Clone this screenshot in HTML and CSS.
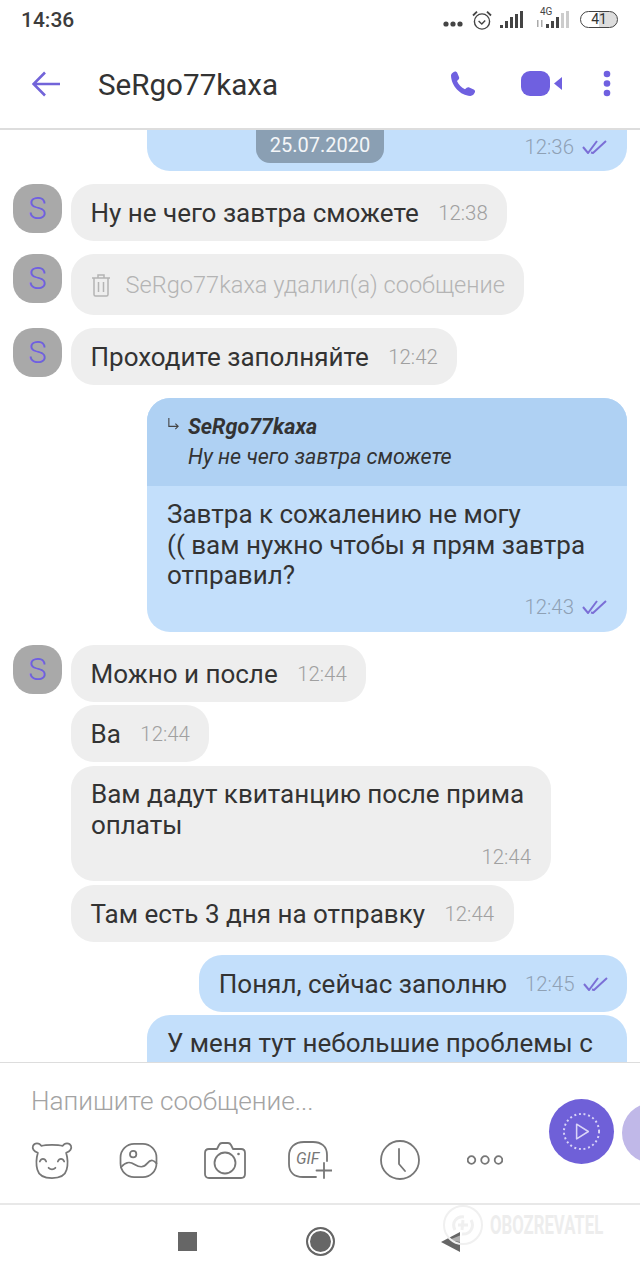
FILE: index.html
```html
<!DOCTYPE html>
<html lang="ru">
<head>
  <meta charset="UTF-8" />
  <meta name="viewport" content="width=device-width, initial-scale=1.0"/>
  <title>SeRgo77kaxa</title>
  <link rel="stylesheet" href="styles.css">
</head>
<body>
  <div class="phone">
    <div class="status-bar">
      <span class="clock">14:36</span>
      <div class="status-icons">
        <svg class="st-dots" viewBox="0 0 20 6"><circle cx="3" cy="3" r="2.6"/><circle cx="10" cy="3" r="2.6"/><circle cx="17" cy="3" r="2.6"/></svg>
        <svg class="st-alarm" viewBox="0 0 20 20" fill="none" stroke="#444" stroke-width="1.4"><circle cx="10" cy="11.5" r="7.6"/><path d="M6.6 11l3.2 3 3.4-3.6"/><path d="M1 5.5L5 1.6M19 5.5L15 1.6" stroke-width="1.8"/></svg>
        <svg class="st-signal" viewBox="0 0 23 17"><rect x="0" y="14" width="3" height="3"/><rect x="5" y="10" width="3" height="7"/><rect x="10" y="6" width="3" height="11"/><rect x="15" y="3" width="3" height="14"/><rect x="20" y="0" width="3" height="17"/></svg>
        <div class="st-lte">
          <span class="st-4g">4G</span>
          <svg class="st-signal small" viewBox="0 0 33 17"><rect x="0" y="9" width="1.5" height="7" fill="#aaa"/><rect x="4" y="9" width="1.5" height="7" fill="#aaa"/><rect x="9" y="13" width="3" height="4"/><rect x="14" y="10" width="3" height="7"/><rect x="19" y="6" width="3" height="11"/><rect x="24" y="2" width="3" height="15" fill="#ccc"/><rect x="29" y="0" width="3" height="17" fill="#ccc"/></svg>
        </div>
        <div class="battery"><span>41</span></div>
      </div>
    </div>

    <header class="top-bar">
      <svg class="back" viewBox="0 0 28 26" fill="none" stroke="#7264d9" stroke-width="2.6"><path d="M1.5 13H28M13 1.5L1.5 13L13 24.5"/></svg>
      <h1 class="title">SeRgo77kaxa</h1>
      <svg class="call" viewBox="0 0 26 26"><path fill="#6f60e0" d="M1 4.5C1 2.6 3.4.6 5 .4c1-.1 1.8.5 2.2 1.4l1.8 4.1c.4.9.2 1.8-.5 2.5L7 10c1.400 3.300 4.300 6.400 8 8.300l1.700-1.500c.8-.6 1.700-.7 2.600-.3l4.400 2c1 .5 1.600 1.400 1.300 2.400-.5 1.700-2.600 4.100-4.800 4-9.700-.3-19-10-19.200-20.400z"/></svg>
      <svg class="video" viewBox="0 0 41 25"><rect x="0" y="0" width="29" height="25" rx="9" fill="#6f60e0"/><path d="M33 12.500L41 6v13z" fill="#6f60e0"/></svg>
      <svg class="more" viewBox="0 0 8 27"><circle cx="4" cy="4" r="3.3"/><circle cx="4" cy="13.500" r="3.300"/><circle cx="4" cy="23" r="3.300"/></svg>
    </header>

    <main class="chat">
      <div class="date-chip">25.07.2020</div>

      <div class="bubble out first">
        <div class="meta"><span class="time">12:36</span><svg class="ticks" viewBox="0 0 25 14"><path d="M1 7l5 6L15 1M9 12.500L11 13 24 1" /></svg></div>
      </div>

      <div class="row">
        <div class="avatar">S</div>
        <div class="bubble in line"><span class="text">Ну не чего завтра сможете</span><span class="time">12:38</span></div>
      </div>

      <div class="row">
        <div class="avatar">S</div>
        <div class="bubble in deleted">
          <svg class="trash" viewBox="0 0 20 24" fill="none" stroke="#b4b4b4" stroke-width="1.500"><path d="M1 5h18M7 5V2h6v3M3 5v16.500A1.500 1.500 0 0 0 4.500 23h11a1.500 1.500 0 0 0 1.500-1.500V5M7.500 9v10M12.500 9v10"/></svg>
          <span class="text">SeRgo77kaxa удалил(а) сообщение</span>
        </div>
      </div>

      <div class="row">
        <div class="avatar">S</div>
        <div class="bubble in line"><span class="text">Проходите заполняйте</span><span class="time">12:42</span></div>
      </div>

      <div class="bubble out reply-msg">
        <div class="quote">
          <svg class="quote-arrow" viewBox="0 0 14 14" fill="none" stroke="#444" stroke-width="1.200"><path d="M2 0v9h10M9 6l3 3-3 3"/></svg>
          <div>
            <div class="quote-name">SeRgo77kaxa</div>
            <div class="quote-text">Ну не чего завтра сможете</div>
          </div>
        </div>
        <div class="body-text">Завтра к сожалению не могу<br>(( вам нужно чтобы я прям завтра<br>отправил?</div>
        <div class="meta"><span class="time">12:43</span><svg class="ticks" viewBox="0 0 25 14"><path d="M1 7l5 6L15 1M9 12.500L11 13 24 1" /></svg></div>
      </div>

      <div class="row">
        <div class="avatar">S</div>
        <div class="bubble in line"><span class="text">Можно и после</span><span class="time">12:44</span></div>
      </div>

      <div class="row cont tight">
        <div class="bubble in line"><span class="text">Ва</span><span class="time">12:44</span></div>
      </div>

      <div class="row cont">
        <div class="bubble in multi">
          <div class="body-text">Вам дадут квитанцию после прима<br>оплаты</div>
          <div class="meta"><span class="time">12:44</span></div>
        </div>
      </div>

      <div class="row cont">
        <div class="bubble in line"><span class="text">Там есть 3 дня на отправку</span><span class="time">12:44</span></div>
      </div>

      <div class="bubble out line">
        <span class="text">Понял, сейчас заполню</span>
        <span class="meta"><span class="time">12:45</span><svg class="ticks" viewBox="0 0 25 14"><path d="M1 7l5 6L15 1M9 12.500L11 13 24 1" /></svg></span>
      </div>

      <div class="bubble out last">
        <div class="body-text">У меня тут небольшие проблемы с</div>
      </div>
    </main>

    <section class="composer">
      <div class="placeholder">Напишите сообщение...</div>
      <div class="tools">
        <svg class="tool bear" viewBox="0 0 42 38"><path d="M6.500 11C2 9.500 .5 6.500 1.500 4 3 .5 8 .5 10 4c5-1.500 17-1.500 22 0 2-3.500 7-3.500 8.500 0 1 2.500-.5 5.500-5 7 1.500 5 2 12 .5 17.500C34.500 34.500 28 37 21 37S7.500 34.500 6 28.500C4.500 23 5 16 6.500 11z"/><path d="M8.500 20c1.500-3.500 5-3.500 6.500 0M27 20c1.500-3.500 5-3.500 6.500 0M17.500 26.500c2 2 5 2 7 0"/></svg>
        <svg class="tool image" viewBox="0 0 39 36"><rect x="1" y="1" width="37" height="34" rx="14"/><circle cx="14" cy="11.500" r="3.300"/><path d="M1.500 25c5-6 9-6 14-3s9 4 13-1 7-3 9.500 0"/></svg>
        <svg class="tool camera" viewBox="0 0 42 37"><path d="M5 7h8l2-4c.5-1 1-2 3-2h6c2 0 2.500 1 3 2l2 4h8c2.500 0 4 1.500 4 4v21c0 2.500-1.500 4-4 4H5c-2.500 0-4-1.500-4-4V11c0-2.500 1.500-4 4-4z"/><circle cx="21" cy="21" r="10.500"/><circle cx="34.500" cy="12" r="1.300" fill="#777" stroke="none"/></svg>
        <div class="tool gif">
          <svg class="gif-frame" viewBox="0 0 44 38"><path d="M39 20V14C39 5 33 1 25 1H16C7 1 1 6 1 15v8c0 8 5 13 14 13h13"/><path d="M36 22v15M28.500 29.500H44"/></svg>
          <span class="gif-text">GIF</span>
        </div>
        <svg class="tool recent" viewBox="0 0 40 40"><circle cx="20" cy="20" r="19"/><path d="M19 9v15l6 7"/></svg>
        <svg class="tool dots" viewBox="0 0 36 10"><circle cx="4.500" cy="5" r="3.800"/><circle cx="18" cy="5" r="3.800"/><circle cx="31.500" cy="5" r="3.800"/></svg>
      </div>
      <button class="fab">
        <svg viewBox="0 0 40 40" fill="none" stroke="#d9d4f7"><circle cx="20" cy="20" r="18" stroke-width="2" stroke-dasharray="2 2.800"/><path d="M15 12.500L27 20 15 27.500z" stroke-width="1.600" stroke-linejoin="round"/></svg>
      </button>
      <div class="fab-next"></div>
    </section>

    <nav class="nav-bar">
      <span class="nav-square"></span>
      <span class="nav-home"></span>
      <svg class="nav-back" viewBox="0 0 19 20"><path d="M19 0v20L0 10z" fill="#666"/><path d="M19 3.500v6.500L8 8z" fill="#b0b0b0"/></svg>
      <div class="watermark">
        <svg viewBox="0 0 40 40" fill="none" stroke="#f0f0f0" stroke-width="2"><circle cx="20" cy="20" r="19"/><path d="M12 25c-4-8 2-14 9-13M28 15c4 7-1 15-9 14M20 15l-1 10M15 20h10" stroke-width="3"/></svg>
        <span>OBOZREVATEL</span>
      </div>
    </nav>
  </div>
</body>
</html>
```

FILE: styles.css
```css
* {
  box-sizing: border-box;
}

body {
  margin: 0;
  font-family: Roboto, "Noto Sans", sans-serif;
  background-color: #fff;
  color: #333;
}

.phone {
  position: relative;
  width: 640px;
  height: 1280px;
  display: flex;
  flex-direction: column;
  overflow: hidden;
}

/* status bar */
.status-bar {
  height: 41px;
  display: flex;
  align-items: center;
  justify-content: space-between;
  padding: 0 22px 2px 21px;
}

.clock {
  font-size: 21px;
  font-weight: 500;
  color: #3c3c3c;
}

.status-icons {
  display: flex;
  align-items: center;
}

.status-icons svg {
  fill: #444;
}

.st-dots {
  width: 20px;
  height: 6px;
  margin-top: 8px;
}

.status-icons .st-alarm {
  width: 20px;
  height: 20px;
  margin-left: 9px;
  fill: none;
}

.st-signal {
  width: 23px;
  height: 17px;
  margin-left: 8px;
}

.st-lte {
  position: relative;
  margin-left: 14px;
  width: 33px;
  height: 17px;
}

.st-signal.small {
  display: block;
  margin: 0;
  width: 33px;
}

.st-4g {
  position: absolute;
  left: 3px;
  top: -4px;
  font-size: 10px;
  line-height: 10px;
  color: #444;
}

.battery {
  width: 38px;
  height: 17px;
  margin-left: 10px;
  border: 1.5px solid #444;
  border-radius: 9px;
  background: linear-gradient(90deg, #fff 0 50%, #ddd 50%);
  font-size: 14px;
  line-height: 14px;
  text-align: center;
  color: #333;
}

/* header */
.top-bar {
  height: 89px;
  display: flex;
  align-items: center;
  padding-bottom: 2px;
  border-bottom: 2px solid #ddd;
}

.back {
  width: 28px;
  height: 26px;
  margin-left: 32px;
}

.title {
  margin: 2px 0 0 38px;
  flex: 1;
  font-size: 29.600px;
  font-weight: 400;
  color: #333;
}

.call {
  width: 26px;
  height: 26px;
}

.video {
  width: 41px;
  height: 25px;
  margin-left: 45px;
}

.more {
  width: 8px;
  height: 27px;
  margin: 0 29px 0 41px;
  fill: #6f60e0;
}

/* messages */
.chat {
  position: relative;
  height: 932px;
  flex-shrink: 0;
  overflow: hidden;
  display: flex;
  flex-direction: column;
}

.chat > * {
  flex-shrink: 0;
}

.date-chip {
  position: absolute;
  top: 0;
  left: 256px;
  width: 128px;
  height: 33px;
  background: #8a9fb3;
  border-radius: 0 0 14px 14px;
  color: #f4f6f8;
  font-size: 20px;
  line-height: 30px;
  text-align: center;
}

.row {
  display: flex;
  gap: 9px;
  margin-top: 13px;
  padding-left: 13px;
  align-items: flex-start;
}

.row.cont {
  margin-top: 4px;
  padding-left: 71px;
}

.row.cont.tight {
  margin-top: 3px;
}

.avatar {
  width: 49px;
  height: 49px;
  border-radius: 20px;
  background: #a9a9a9;
  color: #6f60e0;
  font-size: 31px;
  font-weight: 300;
  line-height: 49px;
  text-align: center;
}

.bubble {
  border-radius: 23px;
  font-size: 26px;
}

.bubble.in {
  background: #eeeeee;
}

.bubble.out {
  align-self: flex-end;
  margin: 13px 13px 0 0;
  background: #c3dffb;
}

.bubble.line {
  height: 57px;
  display: flex;
  align-items: center;
  padding: 0 19.500px;
}

.time {
  font-size: 20.400px;
  font-weight: 300;
  color: #a0a0a0;
  margin-left: 19.500px;
}

.out .time {
  color: #8fa1b5;
  margin-left: 0;
}

.meta {
  display: flex;
  align-items: center;
  justify-content: flex-end;
}

.ticks {
  width: 25px;
  height: 14px;
  margin-left: 8px;
  fill: none;
  stroke: #7b6fd6;
  stroke-width: 2;
}

.bubble.out.first {
  width: 480px;
  height: 41px;
  margin-top: 0;
  padding: 5px 20px 0;
  border-radius: 0 0 23px 23px;
}

.bubble.out.line .meta {
  margin-left: 18px;
}

.bubble.deleted {
  height: 61px;
  display: flex;
  align-items: center;
  padding: 0 19.500px;
  color: #b4b4b4;
  font-size: 23.600px;
  font-weight: 300;
}

.trash {
  width: 20px;
  height: 24px;
  margin-right: 15px;
}

.reply-msg {
  width: 480px;
  height: 234px;
  overflow: hidden;
}

.quote {
  height: 88px;
  background: #afd1f3;
  display: flex;
  gap: 8px;
  padding: 14px 20px 0;
  font-style: italic;
  font-size: 21.500px;
  line-height: 30px;
}

.quote-arrow {
  width: 13px;
  height: 13px;
  margin-top: 6px;
}

.quote-name {
  font-weight: 700;
}

.body-text {
  font-size: 26px;
  line-height: 30.500px;
}

.reply-msg .body-text {
  padding: 13px 20px 0;
}

.reply-msg .meta {
  padding: 4px 20px 0;
}

.multi {
  width: 480px;
  height: 115px;
  padding: 13px 20px 0;
}

.multi .meta {
  padding-top: 5px;
}

.multi .time {
  margin-left: 0;
}

.bubble.out.last {
  width: 480px;
  height: 60px;
  margin-top: 3px;
  padding: 13px 20px 0;
  border-radius: 23px 23px 0 0;
}

/* composer */
.composer {
  position: relative;
  height: 141px;
  flex-shrink: 0;
  border-top: 1px solid #ddd;
  padding: 21px 0 0 31px;
}

.placeholder {
  font-size: 26.200px;
  line-height: 34px;
  font-weight: 300;
  color: #a3a3a3;
}

.tools {
  display: flex;
  align-items: center;
  height: 40px;
  margin-top: 22px;
}

.tool {
  fill: none;
  stroke: #777;
  stroke-width: 1.800;
  stroke-linecap: round;
  stroke-linejoin: round;
  flex-shrink: 0;
}

.bear {
  width: 42px;
  height: 37px;
}

.image {
  width: 39px;
  height: 35px;
  margin-left: 46px;
}

.camera {
  width: 42px;
  height: 37px;
  margin-left: 46px;
}

.gif {
  position: relative;
  width: 44px;
  height: 38px;
  margin-left: 42px;
}

.gif-frame {
  width: 44px;
  height: 38px;
  display: block;
}

.gif-text {
  position: absolute;
  left: 8px;
  top: 8px;
  font-size: 16px;
  line-height: 20px;
  font-style: italic;
  color: #777;
}

.recent {
  width: 40px;
  height: 40px;
  margin-left: 48px;
}

.dots {
  width: 36px;
  height: 10px;
  margin-left: 47px;
}

.fab {
  position: absolute;
  left: 549px;
  top: 36px;
  width: 65px;
  height: 65px;
  padding: 13px;
  border: none;
  border-radius: 50%;
  background: #6f60d8;
}

.fab svg {
  display: block;
}

.fab-next {
  position: absolute;
  left: 622px;
  top: 40px;
  width: 60px;
  height: 60px;
  border-radius: 50%;
  background: #c0b8e8;
}

/* nav bar */
.nav-bar {
  position: relative;
  flex: 1;
  border-top: 2px solid #e8e8e8;
}

.nav-square {
  position: absolute;
  left: 178px;
  top: 27px;
  width: 19px;
  height: 19px;
  background: #666;
}

.nav-home {
  position: absolute;
  left: 306px;
  top: 22px;
  width: 29px;
  height: 29px;
  border-radius: 50%;
  background: #666;
  border: 2.500px solid #666;
  box-shadow: inset 0 0 0 2px #fff;
}

.nav-back {
  position: absolute;
  left: 441px;
  top: 27px;
  width: 19px;
  height: 20px;
}

.watermark {
  position: absolute;
  left: 443px;
  top: 0;
  display: flex;
  align-items: center;
  height: 40px;
}

.watermark svg {
  width: 40px;
  height: 40px;
}

.watermark span {
  margin-left: 7px;
  font-size: 25px;
  font-weight: 700;
  color: #ededed;
  transform: scaleX(0.669);
  transform-origin: left center;
  white-space: nowrap;
}
```
